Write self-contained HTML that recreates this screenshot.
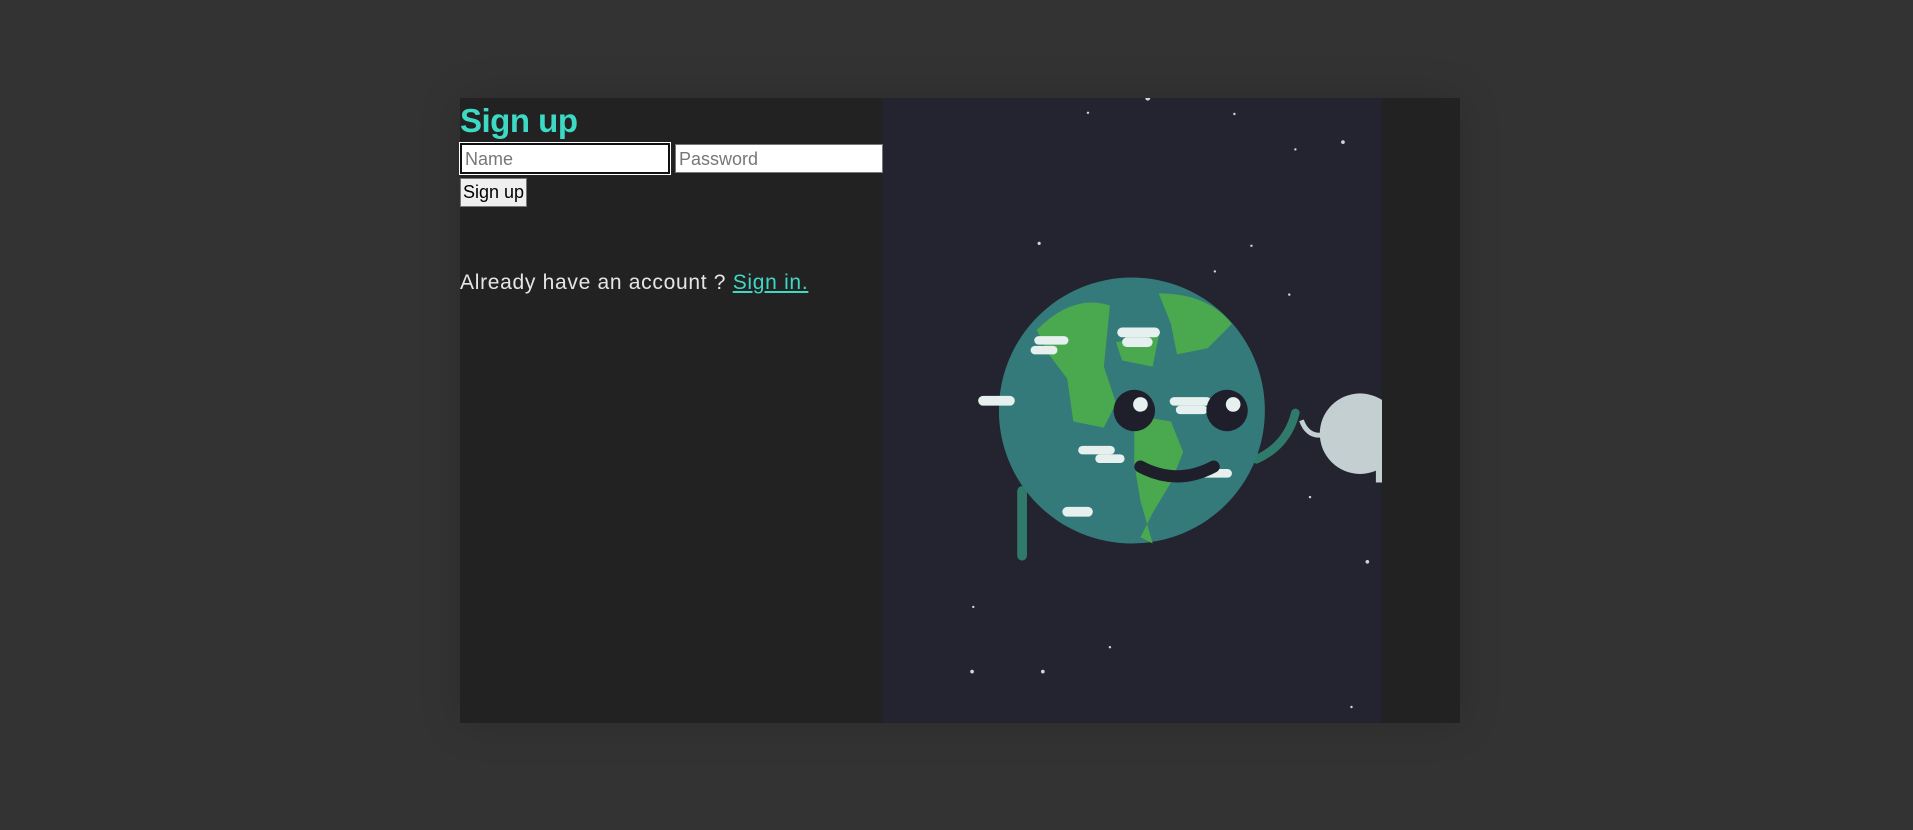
<!DOCTYPE html>
<html><head><meta charset="utf-8"><style>
html,body{margin:0;padding:0;width:1913px;height:830px;background:#333;overflow:hidden;font-family:"Liberation Sans",sans-serif}
.card{position:absolute;left:460px;top:98px;width:1000px;height:625px;background:#222;box-shadow:0 0 40px rgba(0,0,0,.15)}
h1{position:absolute;left:0;top:4px;margin:0;color:#3dd9c5;font-size:33px;font-weight:bold;letter-spacing:-0.5px}
.in{position:absolute;top:46px;height:29px;width:207px;background:#fff;border:1px solid #777;box-sizing:border-box;font-size:18px;color:#777;padding:4px 3px;line-height:20px}
.in.a{left:0;width:210px;height:31px;top:45px;border:2px solid #111;outline:1px solid #fff}
.btn{position:absolute;left:0;top:80px;width:67px;height:29px;background:#efefef;border:1px solid #777;box-sizing:border-box;font-size:18px;color:#000;text-align:center;line-height:26px}
.t{position:absolute;left:0;top:173px;font-size:21px;color:#e6e6e6;letter-spacing:0.7px}
.t a{color:#3dd9c5;text-decoration:underline}
svg{position:absolute;left:423px;top:0}
</style></head><body>
<div class="card">
<h1>Sign up</h1>
<div class="in a">Name</div>
<div class="in" style="left:215px;width:208px">Password</div>
<div class="btn">Sign up</div>
<div class="t">Already have an account ? <a>Sign in.</a></div>
<svg width="499" height="625" viewBox="724 80 409 512">
<rect x="724" y="80" width="409" height="512" fill="#23242f"/>
<g fill="#cfd6d8">
<circle cx="941" cy="80" r="2"/><circle cx="892" cy="92" r="1"/><circle cx="1012" cy="93" r="1"/><circle cx="1062" cy="122" r="1"/><circle cx="1101" cy="116" r="1.5"/>
<circle cx="852" cy="199" r="1.3"/><circle cx="1026" cy="201" r="1"/><circle cx="996" cy="222" r="1"/><circle cx="1057" cy="241" r="1"/>
<circle cx="1121" cy="460" r="1.5"/><circle cx="798" cy="497" r="1"/><circle cx="855" cy="550" r="1.5"/><circle cx="797" cy="550" r="1.5"/><circle cx="1108" cy="579" r="1"/><circle cx="910" cy="530" r="1"/><circle cx="1074" cy="407" r="1"/>
</g>
<path d="M838 402 V455" stroke="#2f7a6b" stroke-width="8" stroke-linecap="round"/>
<path d="M1030 376 Q1055 365 1062 338" stroke="#2f7a6b" stroke-width="7" fill="none" stroke-linecap="round"/>
<circle cx="928" cy="336" r="109" fill="#347a7b"/>
<path d="M850 270 Q880 240 910 250 L905 300 L915 330 L905 350 L880 345 L875 310 L860 290 Z" fill="#4aa94f"/>
<path d="M950 240 Q990 240 1010 265 L990 285 L965 290 L960 265 Z" fill="#4aa94f"/>
<path d="M930 340 L960 345 L970 370 L960 395 L945 420 L935 440 L945 445 L935 410 L930 380 Z" fill="#4aa94f"/>
<path d="M915 280 L950 275 L945 300 L920 295 Z" fill="#4aa94f"/>
<g fill="#e6f0ee">
<rect x="802" y="324" width="30" height="8" rx="4"/><rect x="848" y="275" width="28" height="7" rx="3.5"/><rect x="845" y="283" width="22" height="7" rx="3.5"/>
<rect x="916" y="268" width="35" height="8" rx="4"/><rect x="920" y="276" width="25" height="8" rx="4"/><rect x="959" y="325" width="34" height="7" rx="3.5"/><rect x="964" y="332" width="26" height="7" rx="3.5"/>
<rect x="884" y="365" width="30" height="7" rx="3.5"/><rect x="898" y="372" width="24" height="7" rx="3.5"/><rect x="985" y="384" width="25" height="7" rx="3.5"/><rect x="871" y="415" width="25" height="8" rx="4"/>
</g>
<circle cx="930" cy="336" r="17" fill="#1e1f2b"/><circle cx="1006" cy="336" r="17" fill="#1e1f2b"/>
<circle cx="935" cy="331" r="6" fill="#e6f0ee"/><circle cx="1011" cy="331" r="6" fill="#e6f0ee"/>
<path d="M935 382 Q965 398 995 382" stroke="#1e1f2b" stroke-width="10" fill="none" stroke-linecap="round"/>
<circle cx="1115" cy="355" r="33" fill="#c3cfd0"/>
<path d="M1067 344 Q1072 358 1085 356" stroke="#c3cfd0" stroke-width="4" fill="none"/>
<rect x="1128" y="375" width="5" height="20" fill="#c3cfd0"/>
</svg>
</div>
</body></html>
